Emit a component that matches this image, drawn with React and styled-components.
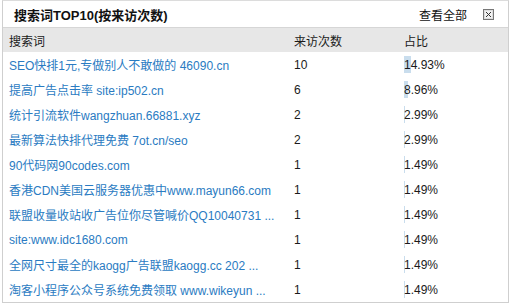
import React from "react"
import styled, { createGlobalStyle } from "styled-components"

const GlobalStyle = createGlobalStyle`
  body {
    margin: 0;
    background: #fff;
    font-family: "Liberation Sans", "Noto Sans CJK SC", sans-serif;
    font-size: 12px;
    color: #222;
  }
`

const Panel = styled.div`
  margin-left: 2px;
  width: 505px;
  border: 1px solid #cfcfcf;
  border-top: 1px solid #dcdcdc;
  background: #fff;
`

const TitleBar = styled.div`
  height: 26px;
  display: flex;
  align-items: center;
  padding: 0 14px 0 11px;
  border-bottom: 1px solid #d6d6d6;
`

const Title = styled.h3`
  margin: 0;
  flex: 1;
  font-size: 13px;
  font-weight: bold;
  color: #111;
`

const ViewAll = styled.a`
  color: #111;
  font-size: 12px;
  text-decoration: none;
  margin-right: 16px;
`

const CloseBox = styled.span`
  width: 9px;
  height: 9px;
  border: 1px solid #777;
  background: #f2f2f2;
  display: flex;
  align-items: center;
  justify-content: center;
  box-shadow: inset 0 0 0 1px #ddd;
`

const Row = styled.div`
  display: grid;
  grid-template-columns: 285px 110px 1fr;
  height: ${(p) => (p.$head ? "24px" : "25px")};
  align-items: center;
  background: ${(p) => (p.$head ? "#e7e7e7" : "transparent")};
`

const Cell = styled.div`
  padding-left: 6px;
  white-space: nowrap;
  overflow: hidden;
  color: ${(p) => (p.$link ? "#2a7bc2" : "#1a1a1a")};
`

const PctCell = styled.div`
  position: relative;
  padding-left: 6px;
  height: 100%;
  display: flex;
  align-items: center;
`

const Bar = styled.span`
  position: absolute;
  left: 6px;
  top: 4px;
  bottom: 4px;
  background: #c9dded;
`

const PctText = styled.span`
  position: relative;
  color: #1a1a1a;
`

const rows = [
  ["SEO快排1元,专做别人不敢做的 46090.cn", 10, 14.93],
  ["提高广告点击率 site:ip502.cn", 6, 8.96],
  ["统计引流软件wangzhuan.66881.xyz", 2, 2.99],
  ["最新算法快排代理免费 7ot.cn/seo", 2, 2.99],
  ["90代码网90codes.com", 1, 1.49],
  ["香港CDN美国云服务器优惠中www.mayun66.com", 1, 1.49],
  ["联盟收量收站收广告位你尽管喊价QQ10040731 ...", 1, 1.49],
  ["site:www.idc1680.com", 1, 1.49],
  ["全网尺寸最全的kaogg广告联盟kaogg.cc 202 ...", 1, 1.49],
  ["淘客小程序公众号系统免费领取 www.wikeyun ...", 1, 1.49],
]

const App = () => (
  <>
    <GlobalStyle />
    <Panel>
      <TitleBar>
        <Title>搜索词TOP10(按来访次数)</Title>
        <ViewAll href="#">查看全部</ViewAll>
        <CloseBox>
          <svg width="7" height="7" viewBox="0 0 7 7">
            <path d="M1 1L6 6M6 1L1 6" stroke="#333" strokeWidth="1" />
          </svg>
        </CloseBox>
      </TitleBar>
      <Row $head>
        <Cell>搜索词</Cell>
        <Cell>来访次数</Cell>
        <Cell>占比</Cell>
      </Row>
      {rows.map(([word, count, pct]) => (
        <Row key={word}>
          <Cell $link>{word}</Cell>
          <Cell>{count}</Cell>
          <PctCell>
            <Bar style={{ width: Math.max(1, Math.round(pct / 2)) + "px" }} />
            <PctText>{pct.toFixed(2)}%</PctText>
          </PctCell>
        </Row>
      ))}
    </Panel>
  </>
)

export default App
